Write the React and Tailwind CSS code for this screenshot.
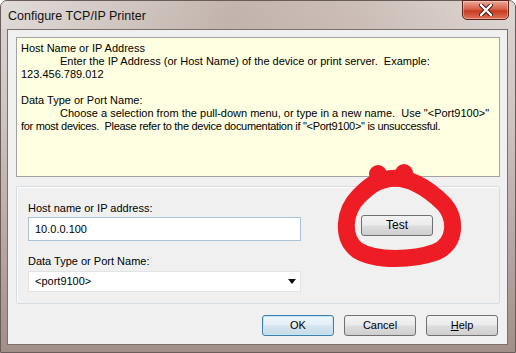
export default function App() {
  const ui = { fontFamily: '"Liberation Sans", Arial, sans-serif' };

  return (
    <div className="relative w-[516px] h-[353px] overflow-hidden bg-white" style={ui}>
      {/* WINDOW FRAME */}
      <div className="w-full h-full flex flex-col rounded-t-[7px] border border-[#6a5c58] bg-[linear-gradient(180deg,#dcd6d3_0%,#cdc3bf_35%,#b3a29d_75%,#a28f89_100%)] pl-[6px] pr-[7px]">
        {/* Title bar */}
        <div className="h-[29px] flex items-start justify-between bg-[linear-gradient(90deg,rgba(255,255,255,0.15)_0%,rgba(150,120,105,0.35)_45%,rgba(170,140,125,0.3)_70%,rgba(255,255,255,0.05)_100%)] -mx-[6px] -mr-[7px] pl-[7px] pr-[6px]">
          <span className="mt-[8px] text-[12.5px] leading-[15px] text-[#111]">
            Configure TCP/IP Printer
          </span>
          <div className="w-[47px] h-[20px] -mt-px rounded-b-[5px] border border-[#5a2218] bg-[linear-gradient(180deg,#eaa896_0%,#d9614a_45%,#c73b22_55%,#dd7256_100%)] flex items-center justify-center shadow-[inset_0_0_0_1px_rgba(255,255,255,0.35)]">
            <svg width="14" height="12" viewBox="0 0 14 12">
              <path
                d="M2 1 L12 11 M12 1 L2 11"
                stroke="#3a1a14"
                strokeWidth="4.2"
                strokeLinecap="round"
              />
              <path
                d="M2 1 L12 11 M12 1 L2 11"
                stroke="#ffffff"
                strokeWidth="2.4"
                strokeLinecap="round"
              />
            </svg>
          </div>
        </div>

        {/* CLIENT AREA */}
        <div className="flex-1 flex flex-col border border-[#7d6f6b] bg-[#f0f0f0] pl-[8px] pr-[7px] pt-[7px] pb-[8px] mb-[7px]">
          {/* Help text */}
          <div className="h-[140px] border border-[#a3a3a3] bg-[#ffffe1] px-[4px] pt-[4px] text-[11px] leading-[13px] text-black whitespace-pre">
            <div>Host Name or IP Address</div>
            <div>
              <span className="inline-block w-[39px]"></span>
              Enter the IP Address (or Host Name) of the device or print server.  Example:
            </div>
            <div>123.456.789.012</div>
            <div>&nbsp;</div>
            <div>Data Type or Port Name:</div>
            <div>
              <span className="inline-block w-[39px]"></span>
              Choose a selection from the pull-down menu, or type in a new name.  Use "&lt;Port9100&gt;"
            </div>
            <div className="tracking-[-0.3px]">
              for most devices.  Please refer to the device documentation if "&lt;Port9100&gt;" is unsuccessful.
            </div>
          </div>

          {/* Group */}
          <div className="mt-[9px] h-[118px] flex items-start border border-[#d5dde3] rounded-[2px] shadow-[inset_1px_1px_0_#ffffff] text-[11px] leading-[13px] text-black">
            <div className="pl-[11px] pt-[15px] flex flex-col">
              <span>Host name or IP address:</span>
              <div className="mt-[2px] w-[273px] h-[24px] border border-[#abc3d6] bg-white flex items-center pl-[6px]">
                10.0.0.100
              </div>
              <span className="mt-[14px]">Data Type or Port Name:</span>
              <div className="mt-[3px] w-[273px] h-[21px] border border-[#e3e3e3] bg-white flex items-center justify-between pl-[6px] pr-[4px]">
                <span>&lt;port9100&gt;</span>
                <svg width="8" height="5" viewBox="0 0 8 5">
                  <path d="M0 0 H8 L4 5 Z" fill="#111" />
                </svg>
              </div>
            </div>
            <button className="ml-[60px] mt-[28px] w-[72px] h-[21px] rounded-[3px] border border-[#707070] bg-[linear-gradient(180deg,#f3f3f3_0%,#ebebeb_48%,#dddddd_52%,#cfcfcf_100%)] text-[12px] leading-[13px] text-black">
              Test
            </button>
          </div>

          {/* Dialog buttons */}
          <div className="mt-[11px] flex justify-end gap-[10px] pr-[2px] text-[11px] leading-[13px] text-black">
            <button className="w-[72px] h-[21px] rounded-[3px] border border-[#3c7fb1] bg-[linear-gradient(180deg,#eef6fb_0%,#e3eef6_48%,#d4e4ef_52%,#c6dbea_100%)] shadow-[inset_0_0_0_1px_#c8e6f8]">
              OK
            </button>
            <button className="w-[72px] h-[21px] rounded-[3px] border border-[#707070] bg-[linear-gradient(180deg,#f3f3f3_0%,#ebebeb_48%,#dddddd_52%,#cfcfcf_100%)]">
              Cancel
            </button>
            <button className="w-[72px] h-[21px] rounded-[3px] border border-[#707070] bg-[linear-gradient(180deg,#f3f3f3_0%,#ebebeb_48%,#dddddd_52%,#cfcfcf_100%)]">
              <span className="underline">H</span>elp
            </button>
          </div>
        </div>
      </div>

      {/* Red marker scribble around Test */}
      <svg
        className="absolute inset-0 pointer-events-none"
        width="516"
        height="353"
        viewBox="0 0 516 353"
      >
        <path
          d="M384 180 C406 173 429 189 444 204 C457 219 456 244 436 252 C414 260 376 262 357 250 C341 237 344 211 359 196 C369 186 376 181 384 180 Z"
          fill="none"
          stroke="#ee1c24"
          strokeWidth="17"
          strokeLinejoin="round"
        />
        <circle cx="378" cy="174" r="9" fill="#ee1c24" />
        <circle cx="404" cy="173" r="9" fill="#ee1c24" />
      </svg>
    </div>
  );
}
